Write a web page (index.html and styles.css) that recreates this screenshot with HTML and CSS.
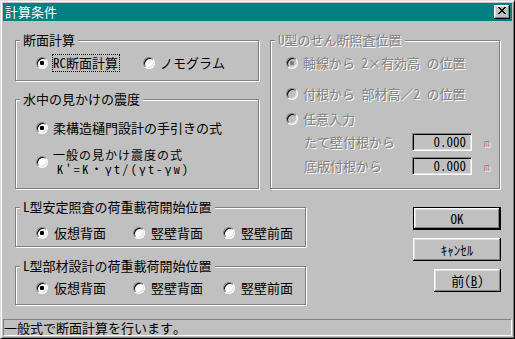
FILE: index.html
```html
<!DOCTYPE html>
<html lang="ja">
<head>
    <meta charset="UTF-8">
    <meta name="viewport" content="width=device-width, initial-scale=1.0">
    <title>計算条件</title>
    <link rel="stylesheet" href="styles.css">
</head>
<body>
    <div class="dialog">
        <div class="titlebar">
            <span class="title">計算条件</span>
            <button class="close-btn" type="button">
                <svg width="8" height="7" viewBox="0 0 8 7" shape-rendering="crispEdges">
                    <path fill="#000" d="M0 0h2v1H0zM6 0h2v1H6zM1 1h2v1H1zM5 1h2v1H5zM2 2h4v1H2zM3 3h2v1H3zM2 4h4v1H2zM1 5h2v1H1zM5 5h2v1H5zM0 6h2v1H0zM6 6h2v1H6z"/>
                </svg>
            </button>
        </div>

        <div class="client">
            <div class="row-top">
                <div class="col-left">
                    <!-- 断面計算 -->
                    <div class="group group-method">
                        <div class="group-title">断面計算</div>
                        <div class="options">
                            <label class="option opt-rc"><span class="radio checked"></span><span class="focus">RC断面計算</span></label>
                            <label class="option"><span class="radio"></span><span>ノモグラム</span></label>
                        </div>
                    </div>

                    <!-- 水中の見かけの震度 -->
                    <div class="group group-seismic">
                        <div class="group-title">水中の見かけの震度</div>
                        <label class="option"><span class="radio checked"></span><span>柔構造樋門設計の手引きの式</span></label>
                        <label class="option option-multi">
                            <span class="radio"></span>
                            <span class="multiline"><span class="line">一般の見かけ震度の式</span><span class="line formula">K'=K・γt/(γt-γw)</span></span>
                        </label>
                    </div>
                </div>

                <!-- U型 (disabled) -->
                <div class="group group-shear disabled">
                    <div class="group-title">U型のせん断照査位置</div>
                    <label class="option row-1"><span class="radio checked"></span><span>軸線から 2×有効高 の位置</span></label>
                    <label class="option row-2"><span class="radio"></span><span>付根から 部材高／2 の位置</span></label>
                    <label class="option row-3"><span class="radio"></span><span>任意入力</span></label>
                    <div class="input-row">
                        <span class="input-label">たて壁付根から</span>
                        <span class="field">0.000</span>
                        <span class="unit">m</span>
                    </div>
                    <div class="input-row">
                        <span class="input-label">底版付根から</span>
                        <span class="field">0.000</span>
                        <span class="unit">m</span>
                    </div>
                </div>
            </div>

            <div class="row-bottom">
                <div class="col-left-wide">
                    <div class="group group-l1">
                        <div class="group-title">L型安定照査の荷重載荷開始位置</div>
                        <div class="options">
                            <label class="option opt-a"><span class="radio checked"></span><span>仮想背面</span></label>
                            <label class="option opt-b"><span class="radio"></span><span>竪壁背面</span></label>
                            <label class="option"><span class="radio"></span><span>竪壁前面</span></label>
                        </div>
                    </div>
                    <div class="group group-l2">
                        <div class="group-title">L型部材設計の荷重載荷開始位置</div>
                        <div class="options">
                            <label class="option opt-a"><span class="radio checked"></span><span>仮想背面</span></label>
                            <label class="option opt-b"><span class="radio"></span><span>竪壁背面</span></label>
                            <label class="option"><span class="radio"></span><span>竪壁前面</span></label>
                        </div>
                    </div>
                </div>

                <div class="buttons">
                    <button class="btn btn-default" type="button">OK</button>
                    <button class="btn" type="button">ｷｬﾝｾﾙ</button>
                    <button class="btn btn-small" type="button">前(<u>B</u>)</button>
                </div>
            </div>
        </div>

        <div class="statusbar">一般式で断面計算を行います。</div>
    </div>
</body>
</html>
```

FILE: styles.css
```css
* {
    margin: 0;
    padding: 0;
    box-sizing: border-box;
}

body {
    font-family: "Noto Sans Mono CJK JP", "Noto Sans CJK JP", monospace;
    font-size: 13px;
    line-height: 16px;
    color: #000;
    background: #c0c0c0;
}

.dialog {
    width: 515px;
    height: 339px;
    display: flex;
    flex-direction: column;
    background: #c0c0c0;
    border: 1px solid;
    border-color: #dfdfdf #000 #000 #dfdfdf;
    box-shadow: inset 1px 1px #fff, inset -1px -1px #808080;
    padding: 2px;
}

/* title bar */
.titlebar {
    height: 18px;
    flex: none;
    display: flex;
    align-items: flex-start;
    background: #008080;
    color: #fff;
}

.title {
    padding-left: 2px;
    line-height: 18px;
}

.close-btn {
    margin: 2px 2px 0 auto;
    width: 16px;
    height: 14px;
    display: flex;
    align-items: flex-start;
    justify-content: flex-start;
    padding: 2px 0 0 4px;
    background: #c0c0c0;
    border: none;
    box-shadow: inset -1px -1px #000, inset 1px 1px #fff, inset -2px -2px #808080, inset 2px 2px #dfdfdf;
}

.close-btn svg {
    display: block;
}

/* client area */
.client {
    flex: 1;
    padding: 19px 0 0 12px;
}

.row-top {
    display: flex;
    height: 149px;
}

.col-left {
    width: 244px;
}

.row-bottom {
    display: flex;
    margin-top: 18px;
}

.col-left-wide {
    width: 291px;
}

/* group boxes */
.group {
    position: relative;
    border: 1px solid #808080;
    box-shadow: inset 1px 1px #fff, 1px 1px #fff;
}

.group-title {
    position: absolute;
    top: -9px;
    left: 4px;
    padding: 0 3px;
    background: #c0c0c0;
    line-height: 16px;
    white-space: nowrap;
}

.group-method {
    height: 41px;
    padding: 14px 0 0 20px;
}

.group-seismic {
    height: 90px;
    margin-top: 18px;
    padding: 20px 0 0 20px;
}

.group-shear {
    width: 230px;
    height: 149px;
    margin-left: 11px;
    padding: 14px 0 0 15px;
}

.group-l1 {
    height: 40px;
    padding: 17px 0 0 20px;
}

.group-l2 {
    height: 39px;
    margin-top: 19px;
    padding: 13px 0 0 20px;
}

/* radio options */
.options {
    display: flex;
}

.option {
    display: flex;
    align-items: center;
    gap: 5px;
    height: 16px;
    white-space: nowrap;
}

.opt-rc {
    width: 107px;
}

.focus {
    outline: 1px dotted #000;
    padding-right: 1px;
}

.option-multi {
    height: 28px;
    margin-top: 12px;
}

.multiline {
    display: flex;
    flex-direction: column;
}

.line {
    height: 14px;
    line-height: 14px;
    font-size: 12px;
    letter-spacing: 1px;
}

.formula {
    padding-left: 4px;
    letter-spacing: 2.4px;
}

.group-l1 .option,
.group-l2 .option {
    gap: 6px;
}

.opt-a {
    width: 97px;
}

.opt-b {
    width: 90px;
}

.radio {
    position: relative;
    flex: none;
    width: 12px;
    height: 12px;
    border-radius: 50%;
    border: 1px solid;
    border-color: #808080 #fff #fff #808080;
    background: #fff;
    box-shadow: inset 1px 1px #000, inset -1px -1px #dfdfdf;
}

.radio.checked::after {
    content: "";
    position: absolute;
    left: 3px;
    top: 3px;
    width: 4px;
    height: 4px;
    border-radius: 1px;
    background: #000;
}

/* disabled group */
.disabled {
    color: #808080;
    text-shadow: 1px 1px 0 #fff;
}

.disabled .radio {
    background: #c0c0c0;
}

.disabled .radio.checked::after {
    background: #808080;
}

.row-2 {
    margin-top: 15px;
}

.row-3 {
    margin-top: 9px;
}

.input-row {
    display: flex;
    align-items: center;
    height: 18px;
    margin-top: 6px;
    padding-left: 18px;
}

.input-label {
    width: 108px;
}

.field {
    width: 60px;
    height: 18px;
    border: 1px solid;
    border-color: #808080 #fff #fff #808080;
    box-shadow: inset 1px 1px #000, inset -1px -1px #dfdfdf;
    text-align: right;
    padding-right: 5px;
    color: #000;
    text-shadow: none;
}

.unit {
    margin-left: 12px;
    font-size: 11px;
}

/* push buttons */
.buttons {
    display: flex;
    flex-direction: column;
    align-items: flex-end;
    gap: 8px;
    margin-left: 107px;
}

.btn {
    width: 88px;
    height: 23px;
    font: inherit;
    color: #000;
    background: #c0c0c0;
    border: none;
    box-shadow: inset -1px -1px #000, inset 1px 1px #fff, inset -2px -2px #808080, inset 2px 2px #dfdfdf;
}

.btn-default {
    border: 1px solid #000;
}

.btn-small {
    width: 67px;
}

/* status bar */
.statusbar {
    height: 17px;
    flex: none;
    border: 1px solid;
    border-color: #808080 #fff #fff #808080;
    line-height: 15px;
    white-space: nowrap;
}
```
